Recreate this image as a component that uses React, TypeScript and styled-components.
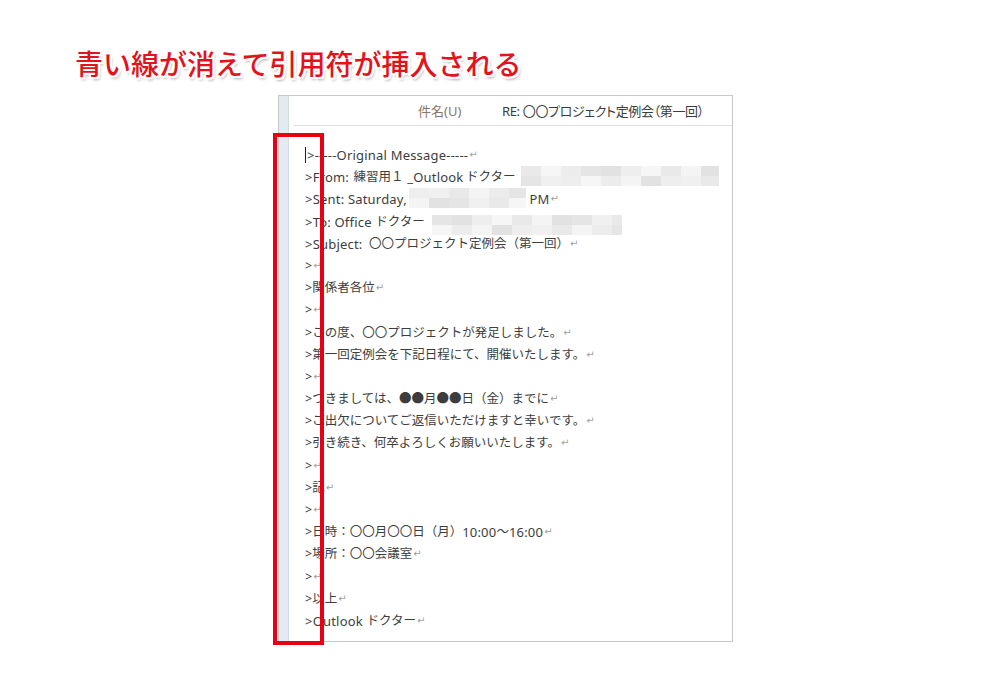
import React from "react";
import styled, { createGlobalStyle } from "styled-components";

const Global = createGlobalStyle`
  html, body { margin: 0; padding: 0; background: #ffffff; }
  body { width: 1000px; height: 700px; overflow: hidden; font-family: "Noto Sans", "Noto Sans CJK JP", sans-serif; }
`;

const Page = styled.div`
  width: 1000px;
  height: 700px;
  padding-top: 43px;
  box-sizing: border-box;
`;

const Title = styled.h1`
  margin: 0 0 0 75px;
  height: 40px;
  font-family: "Noto Sans CJK JP", sans-serif;
  font-weight: 500;
  font-size: 28px;
  line-height: 40px;
  color: #e3121b;
  letter-spacing: 0;
  text-shadow:
    -2px 0 0 #fff, 2px 0 0 #fff, 0 -2px 0 #fff, 0 2px 0 #fff,
    -2px -2px 0 #fff, 2px 2px 0 #fff, -2px 2px 0 #fff, 2px -2px 0 #fff,
    2px 3px 3px rgba(0, 0, 0, 0.35);
`;

const Window = styled.div`
  position: relative;
  margin: 12px 0 0 278px;
  width: 455px;
  height: 547px;
  box-sizing: border-box;
  border: 1px solid #c8c8c8;
  display: flex;
  background: #fff;
`;

const Gutter = styled.div`
  width: 9px;
  background: #e4eaf0;
  border-right: 1px solid #d3dbe3;
  flex: none;
`;

const Main = styled.div`
  flex: 1;
  padding-left: 5px;
  display: flex;
  flex-direction: column;
  overflow: hidden;
`;

const Header = styled.div`
  height: 29px;
  border-bottom: 1px solid #dedede;
  display: flex;
  align-items: center;
  font-size: 13px;
  flex: none;
`;

const Label = styled.span`
  margin-left: 124px;
  width: 84px;
  color: #8a7664;
`;

const Subject = styled.span`
  align-self: stretch;
  flex: 1;
  display: flex;
  align-items: center;
  border-top: 1px solid #b9b9b9;
  margin-top: -1px;
  color: #3c3c3c;
  white-space: nowrap;
  font-feature-settings: "palt";
  letter-spacing: -0.35px;
`;

const Body = styled.div`
  padding: 18px 0 0 11px;
  font-size: 12.5px;
  color: #3d3d3d;
`;

const Line = styled.div`
  height: 22.2px;
  line-height: 22.2px;
  white-space: nowrap;
  display: flex;
  align-items: center;
`;

const Lat = styled.span<{ $gap?: number }>`
  font-size: 13px;
  letter-spacing: 0.2px;
  white-space: pre;
  margin-right: ${(p) => p.$gap ?? 0}px;
`;

const Mark = styled.span`
  font-family: "DejaVu Sans", sans-serif;
  font-size: 10px;
  color: #a0a0a0;
  margin-left: 1px;
`;

const Caret = styled.span`
  display: inline-block;
  width: 1px;
  height: 16px;
  background: #222;
  margin-right: 1px;
`;

const Mosaic = styled.span<{ $w: number; $ml: number; $mt: number }>`
  display: inline-grid;
  grid-auto-flow: column;
  grid-template-rows: repeat(2, 10px);
  width: ${(p) => p.$w}px;
  margin-left: ${(p) => p.$ml}px;
  margin-top: ${(p) => p.$mt}px;
  align-self: flex-start;
  overflow: hidden;
  flex: none;
`;

const Cell = styled.span<{ $c: string }>`
  display: block;
  width: 20px;
  height: 10px;
  background: ${(p) => p.$c};
`;

const RedBox = styled.div`
  position: absolute;
  left: -6px;
  top: 37px;
  width: 51px;
  height: 512px;
  box-sizing: border-box;
  border: 4px solid #e60012;
  pointer-events: none;
`;

const shades = ["#ececec", "#e5e5e5", "#f0f0f0", "#e9e9e9", "#f4f4f4", "#e2e2e2", "#eeeeee", "#f6f6f6"];

function Blur({ w, ml = 0, mt = 0, seed }: { w: number; ml?: number; mt?: number; seed: number }) {
  const cols = Math.ceil(w / 20);
  const cells = [];
  for (let i = 0; i < cols * 2; i++) {
    cells.push(<Cell key={i} $c={shades[(i * 5 + seed * 3 + (i % 3)) % shades.length]} />);
  }
  return (
    <Mosaic $w={w} $ml={ml} $mt={mt}>
      {cells}
    </Mosaic>
  );
}

const R = () => <Mark>↵</Mark>;

const simple: string[] = [
  ">",
  ">関係者各位",
  ">",
  ">この度、〇〇プロジェクトが発足しました。",
  ">第一回定例会を下記日程にて、開催いたします。",
  ">",
  ">つきましては、●●月●●日（金）までに",
  ">ご出欠についてご返信いただけますと幸いです。",
  ">引き続き、何卒よろしくお願いいたします。",
  ">",
  ">記",
  ">",
];

export default function App() {
  return (
    <>
      <Global />
      <Page>
        <Title>青い線が消えて引用符が挿入される</Title>
        <Window>
          <Gutter />
          <Main>
            <Header>
              <Label>件名(U)</Label>
              <Subject>RE: 〇〇プロジェクト定例会（第一回）</Subject>
            </Header>
            <Body>
              <Line>
                <Caret />
                <Lat>&gt;-----Original Message-----</Lat>
                <R />
              </Line>
              <Line>
                <Lat $gap={1}>&gt;From: </Lat>練習用１<Lat> _Outlook</Lat>
                <Lat $gap={-1}> </Lat>ドクター
                <Blur w={198} ml={5} mt={0} seed={1} />
              </Line>
              <Line>
                <Lat>&gt;Sent: Saturday,</Lat>
                <Blur w={117} ml={2} mt={0} seed={2} />
                <Lat> PM</Lat>
                <R />
              </Line>
              <Line>
                <Lat>&gt;To: Office </Lat>ドクター
                <Blur w={190} ml={7} mt={4} seed={3} />
              </Line>
              <Line>
                <Lat $gap={3}>&gt;Subject: </Lat>〇〇プロジェクト定例会（第一回）
                <R />
              </Line>
              {simple.map((t, i) => (
                <Line key={i}>
                  {t}
                  <R />
                </Line>
              ))}
              <Line>
                &gt;日時：〇〇月〇〇日（月）<Lat>10:00</Lat>〜<Lat>16:00</Lat>
                <R />
              </Line>
              <Line>
                &gt;場所：〇〇会議室
                <R />
              </Line>
              <Line>
                &gt;
                <R />
              </Line>
              <Line>
                &gt;以上
                <R />
              </Line>
              <Line>
                <Lat>&gt;Outlook </Lat>ドクター
                <R />
              </Line>
            </Body>
          </Main>
          <RedBox />
        </Window>
      </Page>
    </>
  );
}
